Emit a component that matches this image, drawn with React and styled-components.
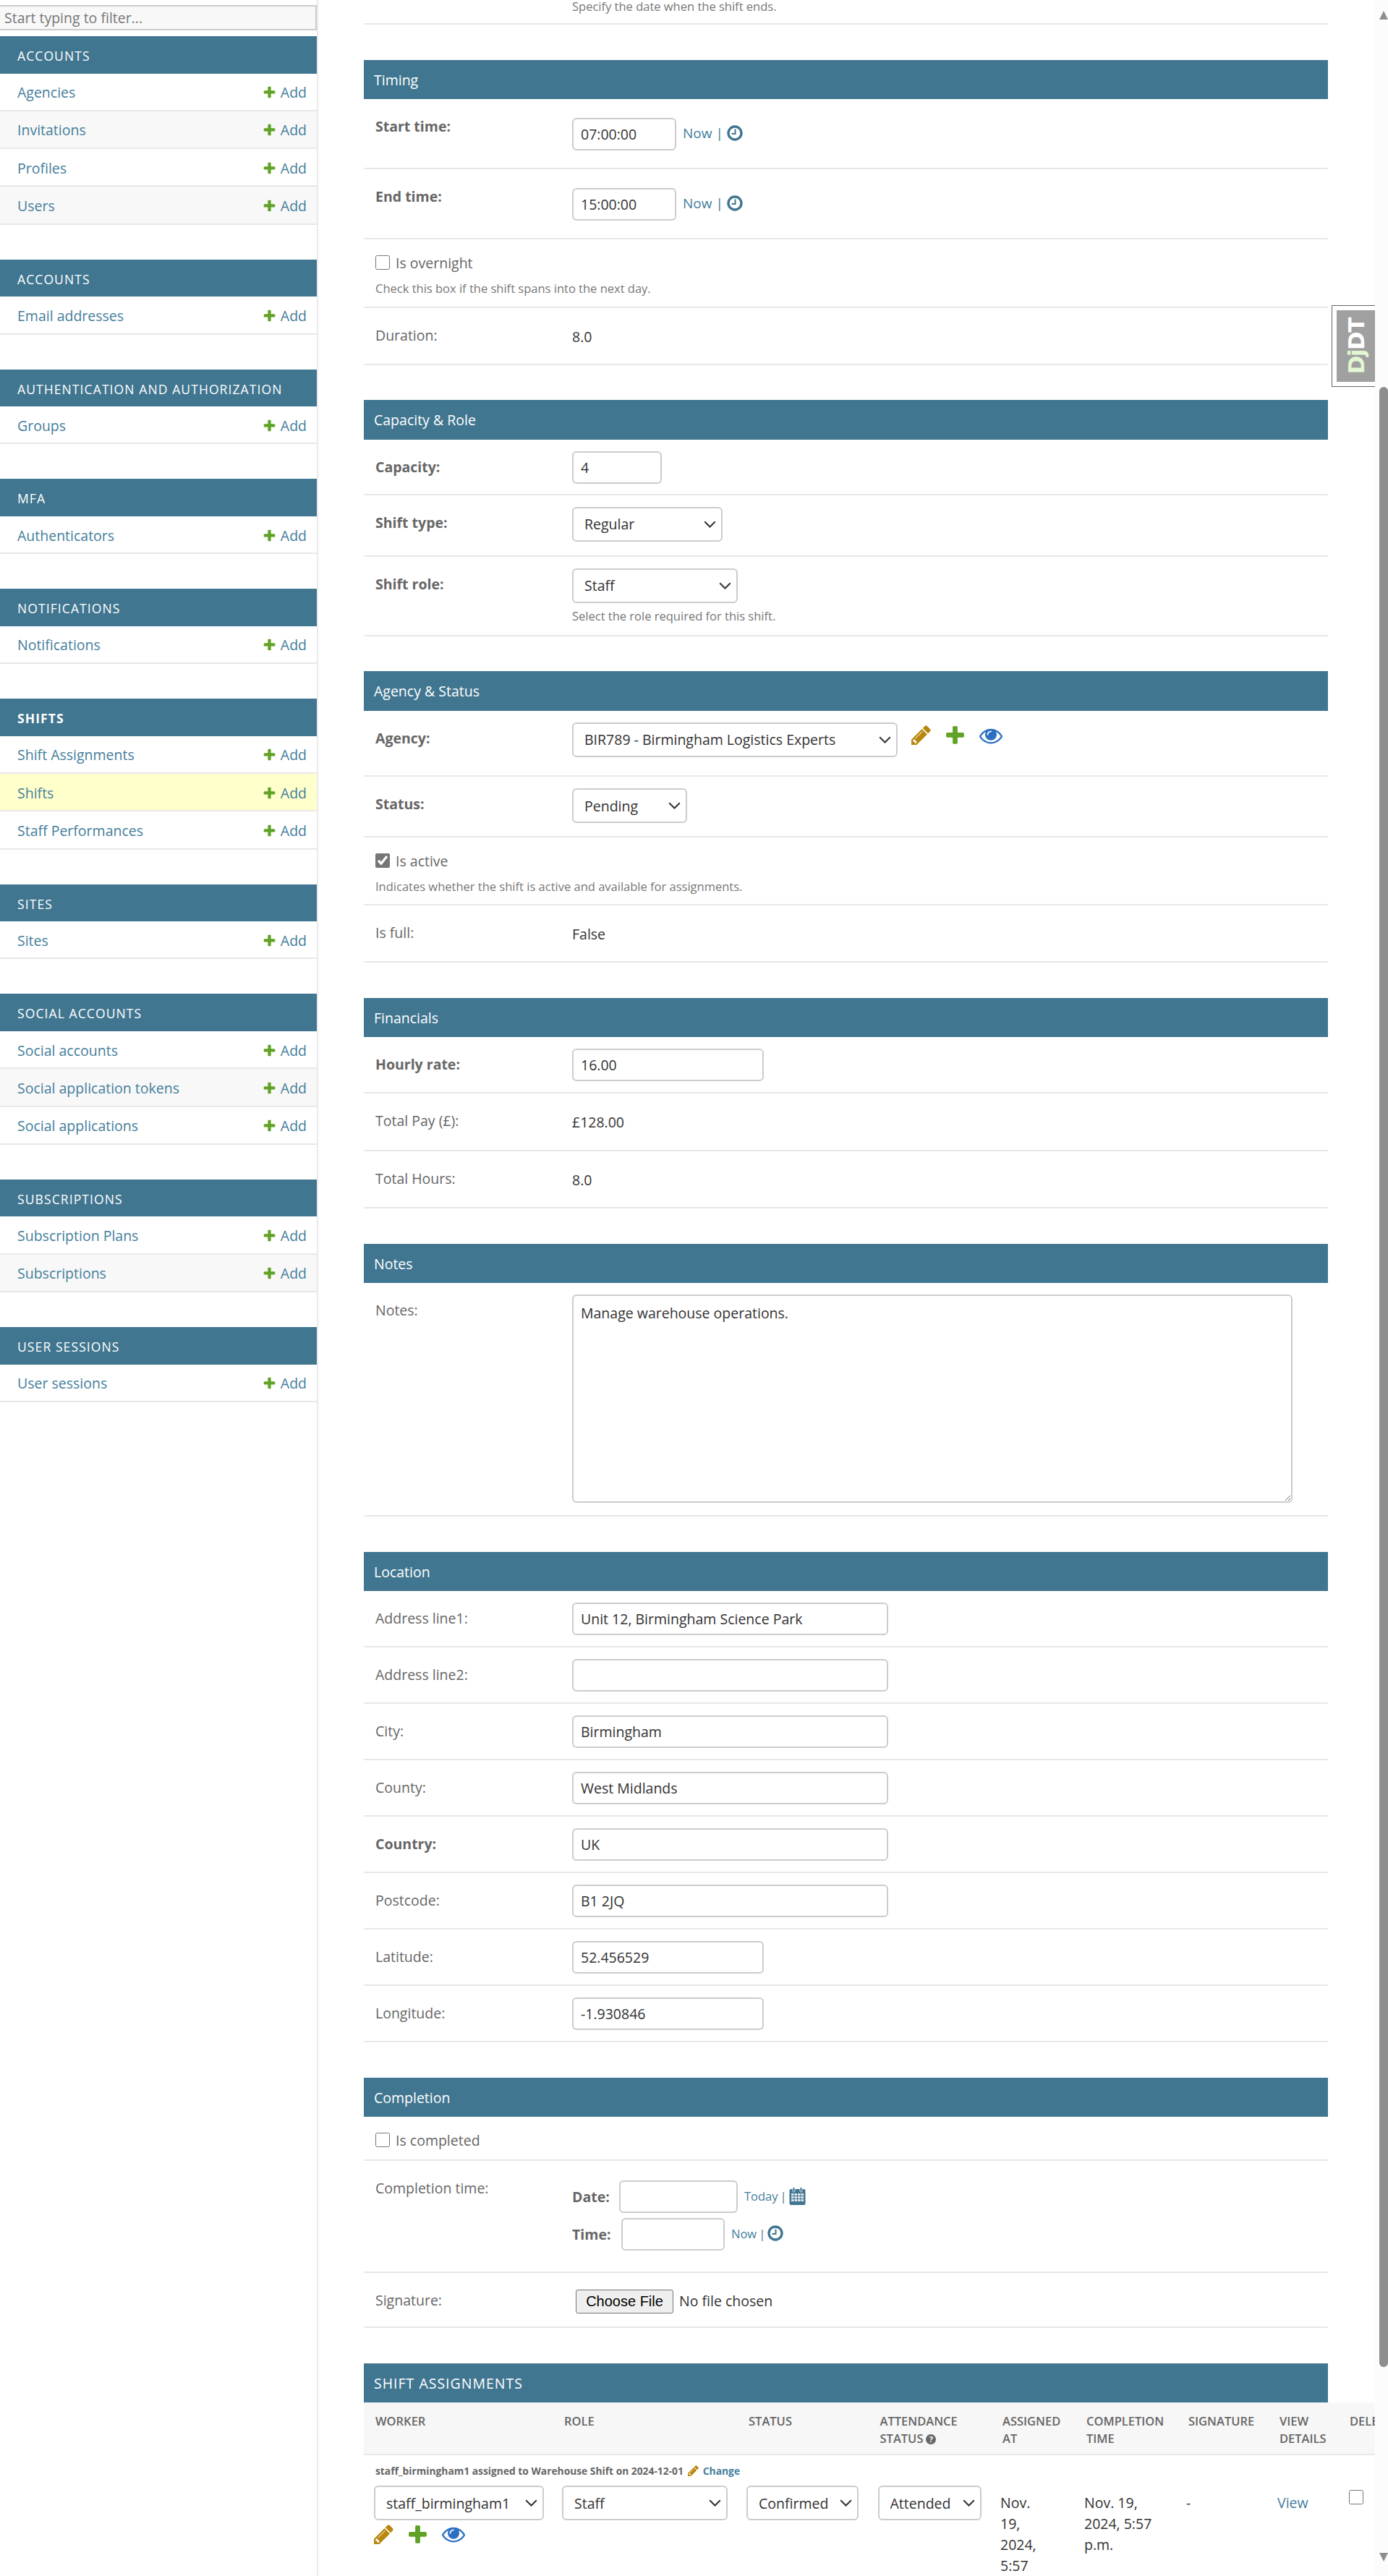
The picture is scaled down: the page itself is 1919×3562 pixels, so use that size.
import React from "react";
import styled, { createGlobalStyle } from "styled-components";

const FONT = `"Open Sans", "Noto Sans", sans-serif`;

const CHEVRON =
  "data:image/svg+xml," +
  encodeURIComponent(
    '<svg xmlns="http://www.w3.org/2000/svg" width="17" height="10" viewBox="0 0 17 10"><path d="M1.2 1.2 8.5 8.5 15.8 1.2" fill="none" stroke="#333" stroke-width="2"/></svg>'
  );

const GlobalStyle = createGlobalStyle`
  html, body {
    margin: 0;
    padding: 0;
    background: #fff;
    font-family: ${FONT};
  }
  * {
    box-sizing: border-box;
  }
`;

const Page = styled.div`
  display: flex;
  width: 1919px;
  height: 3562px;
  overflow: hidden;
  background: #fff;
`;

/* sidebar */
const Sidebar = styled.nav`
  flex: 0 0 440px;
  border-right: 2px solid #eaeaea;
  padding-top: 7px;
`;

const Filter = styled.input`
  display: block;
  width: 438px;
  height: 35px;
  margin-bottom: 8px;
  padding: 0 6px;
  border: 2px solid #ccc;
  border-left: 0;
  background: #f8f8f8;
  font: 19.5px ${FONT};
  &::placeholder {
    color: #777;
    opacity: 1;
  }
`;

const AppGroup = styled.section`
  margin-bottom: 48px;
`;

const AppCaption = styled.div`
  height: 51.5px;
  padding-left: 24px;
  background: #417690;
  color: #fff;
  font-size: 17.5px;
  font-weight: ${({ $current }) => ($current ? 700 : 400)};
  letter-spacing: 1.1px;
  line-height: 55px;
  text-transform: uppercase;
`;

const ModelRow = styled.div`
  display: flex;
  align-items: center;
  justify-content: space-between;
  height: 52.33px;
  padding: 2px 14px 0 24px;
  border-bottom: 2px solid #e8e8e8;
  background: ${({ $selected, $alt }) => ($selected ? "#ffc" : $alt ? "#f8f8f8" : "#fff")};
  color: #447e9b;
  font-size: 19.5px;
  font-weight: 500;
`;

const AddLink = styled.span`
  display: flex;
  align-items: center;
  gap: 7px;
  font-weight: 400;
`;

/* main form */
const Main = styled.main`
  position: relative;
  flex: 1;
  min-width: 0;
  padding: 0 65px 0 63px;
  overflow: hidden;
`;

const Fieldset = styled.section`
  margin-top: 48.5px;
`;

const Caption = styled.h2`
  height: 54.5px;
  margin: 0;
  padding-left: 14px;
  background: #417690;
  color: #fff;
  font-size: 19.5px;
  font-weight: 400;
  letter-spacing: ${({ $upper }) => ($upper ? "1px" : "0")};
  line-height: 56px;
  text-transform: ${({ $upper }) => ($upper ? "uppercase" : "none")};
`;

const Row = styled.div`
  display: flex;
  height: ${({ $h }) => $h}px;
  padding: 16px 16px 0;
  border-bottom: 2px solid #e8e8e8;
`;

const TopRow = styled.div`
  height: 34px;
  padding-left: 288px;
  border-bottom: 2px solid #e8e8e8;
  color: #777;
  font-size: 16.5px;
  line-height: 17px;
`;

const Label = styled.label`
  flex: 0 0 272px;
  margin-top: 8px;
  color: #666;
  font-size: 19.5px;
  font-weight: ${({ $bold }) => ($bold ? 700 : 400)};
  line-height: 27px;
`;

const Value = styled.div`
  margin-top: 10px;
  color: #333;
  font-size: 19.5px;
  line-height: 27px;
`;

const Controls = styled.div`
  display: flex;
  flex-direction: column;
  margin-top: ${({ $top }) => $top || 0}px;
`;

const Inline = styled.div`
  display: flex;
  align-items: flex-start;
`;

const TextInput = styled.input`
  display: block;
  width: ${({ $w }) => $w}px;
  height: 45px;
  padding: 0 10px;
  border: 2px solid #ccc;
  border-radius: 6px;
  background: #fff;
  color: #333;
  font: 19.5px ${FONT};
`;

const Select = styled.select`
  display: block;
  width: ${({ $w }) => $w}px;
  height: 48px;
  padding: 0 26px 0 15px;
  border: 2px solid #ccc;
  border-radius: 6px;
  appearance: none;
  background: #fff url("${CHEVRON}") no-repeat right 7px center;
  color: #333;
  font: 19.5px ${FONT};
`;

const Notes = styled.textarea`
  display: block;
  width: 996px;
  height: 288px;
  padding: 10px;
  border: 2px solid #ccc;
  border-radius: 6px;
  background: #fff;
  color: #333;
  font: 19.5px/27px ${FONT};
`;

const Help = styled.div`
  margin-top: ${({ $top }) => $top || 0}px;
  color: #777;
  font-size: 16.5px;
  line-height: 22px;
`;

const CheckLine = styled.label`
  display: flex;
  align-items: center;
  gap: 8px;
  height: 32px;
  color: #666;
  font-size: 19.5px;
`;

const Check = styled.input.attrs({ type: "checkbox" })`
  width: 20px;
  height: 20px;
  margin: 0;
  accent-color: #767676;
`;

const CheckBlock = styled.div`
  display: flex;
  flex-direction: column;
`;

const Shortcuts = styled.span`
  display: flex;
  align-items: center;
  gap: ${({ $small }) => ($small ? 3 : 5)}px;
  height: 42px;
  margin-left: 9px;
  color: #447e9b;
  font-size: ${({ $small }) => ($small ? 16.5 : 19)}px;
`;

const Sep = styled.span`
  color: #417690;
`;

const RelatedIcons = styled.div`
  display: flex;
  align-items: center;
  gap: 20px;
  height: ${({ $h }) => $h}px;
  margin-left: ${({ $left }) => $left}px;
`;

const SubRow = styled.div`
  display: flex;
  align-items: flex-start;
  margin-bottom: 7px;
`;

const SubLabel = styled.span`
  flex: 0 0 ${({ $w }) => $w}px;
  color: #666;
  font-size: 19.5px;
  font-weight: 700;
  line-height: 45px;
`;

const FileInput = styled.input.attrs({ type: "file" })`
  margin: 7px 0 0 5px;
  color: #333;
  font: 19.5px ${FONT};
  &::file-selector-button {
    width: 135px;
    height: 33px;
    margin-right: 8px;
    border: 1.5px solid #767676;
    border-radius: 3px;
    background: #efefef;
    color: #000;
    font: 20px "Liberation Sans", Arial, sans-serif;
  }
`;

/* inline table */
const Table = styled.div`
  width: 1447px;
`;

const TableGrid = styled.div`
  display: grid;
  grid-template-columns: 261px 255px 181.5px 169.5px 116px 141px 126px 97px 100px;
`;

const HeadRow = styled(TableGrid)`
  height: 73px;
  border-bottom: 2px solid #e8e8e8;
  background: #f7f7f7;
`;

const HeadCell = styled.div`
  padding: 14px 0 0 16px;
  color: #666;
  font-size: 16.5px;
  font-weight: 600;
  line-height: 23.5px;
  text-transform: uppercase;
`;

const HelpDot = styled.span`
  display: inline-block;
  width: 14px;
  height: 14px;
  margin-left: 4px;
  border-radius: 50%;
  background: #666;
  color: #fff;
  font-size: 11px;
  font-weight: 700;
  line-height: 14px;
  text-align: center;
  vertical-align: 1px;
`;

const InlineTitle = styled.div`
  display: flex;
  align-items: center;
  gap: 6px;
  height: 42px;
  padding-left: 16px;
  color: #666;
  font-size: 13.8px;
  font-weight: 700;
`;

const ChangeLink = styled.span`
  color: #447e9b;
`;

const Cell = styled.div`
  padding-left: ${({ $first }) => ($first ? 14 : 13)}px;
  color: #333;
  font-size: 19.5px;
  line-height: 29px;
`;

const TextCell = styled(Cell)`
  padding-top: 9px;
  color: ${({ $link }) => ($link ? "#447e9b" : "#333")};
`;

const RowCheck = styled(Check)`
  margin: 6px 0 0 1px;
`;

/* debug toolbar handle, lies over the page */
const DebugHandle = styled.div`
  position: absolute;
  top: 422px;
  right: 0;
  width: 60px;
  height: 113px;
  padding: 6px 0 6px 6px;
  border: 1.5px solid #666;
  border-right: 0;
  background: #fff;
`;

const DebugInner = styled.div`
  display: flex;
  align-items: center;
  justify-content: center;
  height: 100%;
  background: #a0a0a0;
  color: #fff;
  font: 700 31px "DejaVu Sans", sans-serif;
  letter-spacing: -1.5px;
`;

const DebugText = styled.span`
  writing-mode: vertical-rl;
  transform: rotate(180deg);
  span {
    color: #e3f7d2;
  }
`;

/* scrollbar */
const ScrollTrack = styled.div`
  flex: 0 0 18px;
  padding-left: 6px;
  background: #fcfcfc;
`;

const ScrollUp = styled.div`
  width: 0;
  height: 0;
  margin: 15px 0 0 0;
  border-left: 6px solid transparent;
  border-right: 6px solid transparent;
  border-bottom: 12px solid #8e8e8e;
`;

const ScrollThumb = styled.div`
  height: 2738px;
  margin-top: 508px;
  border-radius: 6px;
  background: #8e8e8e;
`;

const ScrollDown = styled.div`
  width: 0;
  height: 0;
  margin-top: 257px;
  border-left: 6px solid transparent;
  border-right: 6px solid transparent;
  border-top: 12px solid #8e8e8e;
`;

/* icons */
const PencilIcon = ({ size = 27 }) => (
  <svg width={size} height={size} viewBox="128 128 1536 1536" style={{ flex: "none" }}>
    <path
      fill="#b8860b"
      d="M491 1536l91-91-235-235-91 91v107h128v128h107zm523-928q0-22-22-22-10 0-17 7l-542 542q-7 7-7 17 0 22 22 22 10 0 17-7l542-542q7-7 7-17zm-54-192l416 416-832 832h-416v-416zm683 96q0 53-37 90l-166 166-416-416 166-165q36-38 90-38 53 0 91 38l235 234q37 39 37 91z"
    />
  </svg>
);

const PlusIcon = ({ size = 27 }) => (
  <svg width={size} height={size} viewBox="128 128 1536 1536" style={{ flex: "none" }}>
    <path
      fill="#5fa225"
      d="M1600 796v192q0 40-28 68t-68 28h-416v416q0 40-28 68t-68 28h-192q-40 0-68-28t-28-68v-416h-416q-40 0-68-28t-28-68v-192q0-40 28-68t68-28h416v-416q0-40 28-68t68-28h192q40 0 68 28t28 68v416h416q40 0 68 28t28 68z"
    />
  </svg>
);

const EyeIcon = () => (
  <svg width="32" height="32" viewBox="0 0 1792 1792" style={{ flex: "none" }}>
    <path
      fill="#2a6fc2"
      d="M1664 960q-152-236-381-353 61 104 61 225 0 185-131.5 316.5t-316.5 131.5-316.5-131.5-131.5-316.5q0-121 61-225-229 117-381 353 133 205 333.5 326.5t434.5 121.5 434.5-121.5 333.5-326.5zm-720-384q0-20-14-34t-34-14q-125 0-214.5 89.5t-89.5 214.5q0 20 14 34t34 14 34-14 14-34q0-86 61-147t147-61q20 0 34-14t14-34zm848 384q0 34-20 69-140 230-376.5 368.5t-499.5 138.5-499.5-139-376.5-368q-20-35-20-69t20-69q140-229 376.5-368t499.5-139 499.5 139 376.5 368q20 35 20 69z"
    />
  </svg>
);

const ClockIcon = () => (
  <svg width="22" height="22" viewBox="0 0 22 22" style={{ flex: "none" }}>
    <circle cx="11" cy="11" r="9" fill="none" stroke="#417690" strokeWidth="3.4" />
    <path d="M11.5 5.5v6.5h-5" fill="none" stroke="#417690" strokeWidth="2" />
  </svg>
);

const CalendarIcon = () => (
  <svg width="23" height="25" viewBox="0 0 23 25" style={{ flex: "none" }}>
    <rect x="0.5" y="3" width="22" height="22" rx="2" fill="#417690" />
    <rect x="5" y="0.5" width="3" height="6.5" rx="1.5" fill="#417690" stroke="#fff" strokeWidth="0.8" />
    <rect x="15" y="0.5" width="3" height="6.5" rx="1.5" fill="#417690" stroke="#fff" strokeWidth="0.8" />
    <path
      d="M3 9h3.5v3H3zM7.5 9H11v3H7.5zM12 9h3.5v3H12zM16.5 9H20v3h-3.5zM3 13h3.5v3H3zM7.5 13H11v3H7.5zM12 13h3.5v3H12zM16.5 13H20v3h-3.5zM3 17h3.5v3H3zM7.5 17H11v3H7.5zM12 17h3.5v3H12zM16.5 17H20v3h-3.5z"
      fill="#fff"
      opacity="0.85"
    />
  </svg>
);

const groups = [
  { title: "Accounts", models: ["Agencies", "Invitations", "Profiles", "Users"] },
  { title: "Accounts", models: ["Email addresses"] },
  { title: "Authentication and Authorization", models: ["Groups"] },
  { title: "MFA", models: ["Authenticators"] },
  { title: "Notifications", models: ["Notifications"] },
  { title: "Shifts", current: true, models: ["Shift Assignments", "Shifts", "Staff Performances"] },
  { title: "Sites", models: ["Sites"] },
  { title: "Social Accounts", models: ["Social accounts", "Social application tokens", "Social applications"] },
  { title: "Subscriptions", models: ["Subscription Plans", "Subscriptions"] },
  { title: "User Sessions", models: ["User sessions"] },
];

const location = [
  { label: "Address line1:", value: "Unit 12, Birmingham Science Park", w: 437 },
  { label: "Address line2:", value: "", w: 437 },
  { label: "City:", value: "Birmingham", w: 437 },
  { label: "County:", value: "West Midlands", w: 437 },
  { label: "Country:", value: "UK", w: 437, bold: true },
  { label: "Postcode:", value: "B1 2JQ", w: 437 },
  { label: "Latitude:", value: "52.456529", w: 265 },
  { label: "Longitude:", value: "-1.930846", w: 265 },
];

const tableHeads = [
  "Worker",
  "Role",
  "Status",
  "Attendance status",
  "Assigned at",
  "Completion time",
  "Signature",
  "View details",
  "Delete?",
];

const Option = ({ children }) => <option>{children}</option>;

function NavSidebar() {
  return (
    <Sidebar>
      <Filter placeholder="Start typing to filter..." />
      {groups.map((group, i) => (
        <AppGroup key={i}>
          <AppCaption $current={group.current}>{group.title}</AppCaption>
          {group.models.map((model, j) => (
            <ModelRow key={model} $alt={j % 2 === 1} $selected={model === "Shifts"}>
              {model}
              <AddLink>
                <PlusIcon size={17} />
                Add
              </AddLink>
            </ModelRow>
          ))}
        </AppGroup>
      ))}
    </Sidebar>
  );
}

function TimeField({ label, value, h }) {
  return (
    <Row $h={h}>
      <Label $bold>{label}</Label>
      <Controls $top={10}>
        <Inline>
          <TextInput $w={144} defaultValue={value} />
          <Shortcuts>
            Now <Sep>|</Sep> <ClockIcon />
          </Shortcuts>
        </Inline>
      </Controls>
    </Row>
  );
}

function ShiftAssignments() {
  return (
    <Fieldset>
      <Caption $upper>Shift assignments</Caption>
      <Table>
        <HeadRow>
          {tableHeads.map((head) => (
            <HeadCell key={head}>
              {head}
              {head === "Attendance status" && <HelpDot>?</HelpDot>}
            </HeadCell>
          ))}
        </HeadRow>
        <InlineTitle>
          staff_birmingham1 assigned to Warehouse Shift on 2024-12-01
          <PencilIcon size={15} />
          <ChangeLink>Change</ChangeLink>
        </InlineTitle>
        <TableGrid>
          <Cell $first>
            <Select $w={235}>
              <Option>staff_birmingham1</Option>
            </Select>
            <RelatedIcons $h={38} $left={0}>
              <PencilIcon />
              <PlusIcon />
              <EyeIcon />
            </RelatedIcons>
          </Cell>
          <Cell>
            <Select $w={229}>
              <Option>Staff</Option>
            </Select>
          </Cell>
          <Cell>
            <Select $w={155}>
              <Option>Confirmed</Option>
            </Select>
          </Cell>
          <Cell>
            <Select $w={143}>
              <Option>Attended</Option>
            </Select>
          </Cell>
          <TextCell>
            Nov.
            <br />
            19,
            <br />
            2024,
            <br />
            5:57
          </TextCell>
          <TextCell>
            Nov. 19,
            <br />
            2024, 5:57
            <br />
            p.m.
          </TextCell>
          <TextCell>-</TextCell>
          <TextCell $link>View</TextCell>
          <Cell $first>
            <RowCheck />
          </Cell>
        </TableGrid>
      </Table>
    </Fieldset>
  );
}

export default function App() {
  return (
    <Page>
      <GlobalStyle />
      <NavSidebar />
      <Main>
        <TopRow>Specify the date when the shift ends.</TopRow>

        <Fieldset>
          <Caption>Timing</Caption>
          <TimeField label="Start time:" value="07:00:00" h={96.5} />
          <TimeField label="End time:" value="15:00:00" h={97.5} />
          <Row $h={94.5}>
            <CheckBlock>
              <CheckLine>
                <Check />
                Is overnight
              </CheckLine>
              <Help $top={9}>Check this box if the shift spans into the next day.</Help>
            </CheckBlock>
          </Row>
          <Row $h={79}>
            <Label>Duration:</Label>
            <Value>8.0</Value>
          </Row>
        </Fieldset>

        <Fieldset>
          <Caption>Capacity &amp; Role</Caption>
          <Row $h={77}>
            <Label $bold>Capacity:</Label>
            <TextInput $w={124} defaultValue="4" />
          </Row>
          <Row $h={85}>
            <Label $bold>Shift type:</Label>
            <Select $w={208}>
              <Option>Regular</Option>
            </Select>
          </Row>
          <Row $h={110}>
            <Label $bold>Shift role:</Label>
            <Controls>
              <Select $w={229}>
                <Option>Staff</Option>
              </Select>
              <Help $top={7}>Select the role required for this shift.</Help>
            </Controls>
          </Row>
        </Fieldset>

        <Fieldset>
          <Caption>Agency &amp; Status</Caption>
          <Row $h={91.5}>
            <Label $bold>Agency:</Label>
            <Select $w={450}>
              <Option>BIR789 - Birmingham Logistics Experts</Option>
            </Select>
            <RelatedIcons $h={36} $left={19}>
              <PencilIcon />
              <PlusIcon />
              <EyeIcon />
            </RelatedIcons>
          </Row>
          <Row $h={84}>
            <Label $bold>Status:</Label>
            <Select $w={159}>
              <Option>Pending</Option>
            </Select>
          </Row>
          <Row $h={94}>
            <CheckBlock>
              <CheckLine>
                <Check defaultChecked />
                Is active
              </CheckLine>
              <Help $top={9}>Indicates whether the shift is active and available for assignments.</Help>
            </CheckBlock>
          </Row>
          <Row $h={79}>
            <Label>Is full:</Label>
            <Value>False</Value>
          </Row>
        </Fieldset>

        <Fieldset>
          <Caption>Financials</Caption>
          <Row $h={78}>
            <Label $bold>Hourly rate:</Label>
            <TextInput $w={265} defaultValue="16.00" />
          </Row>
          <Row $h={80}>
            <Label>Total Pay (£):</Label>
            <Value>£128.00</Value>
          </Row>
          <Row $h={79}>
            <Label>Total Hours:</Label>
            <Value>8.0</Value>
          </Row>
        </Fieldset>

        <Fieldset>
          <Caption>Notes</Caption>
          <Row $h={323}>
            <Label>Notes:</Label>
            <Notes defaultValue="Manage warehouse operations." />
          </Row>
        </Fieldset>

        <Fieldset>
          <Caption>Location</Caption>
          {location.map((field) => (
            <Row key={field.label} $h={78}>
              <Label $bold={field.bold}>{field.label}</Label>
              <TextInput $w={field.w} defaultValue={field.value} />
            </Row>
          ))}
        </Fieldset>

        <Fieldset>
          <Caption>Completion</Caption>
          <Row $h={61}>
            <CheckLine>
              <Check />
              Is completed
            </CheckLine>
          </Row>
          <Row $h={155}>
            <Label>Completion time:</Label>
            <Controls $top={11}>
              <SubRow>
                <SubLabel $w={65}>Date:</SubLabel>
                <TextInput $w={164} />
                <Shortcuts $small>
                  Today <Sep>|</Sep> <CalendarIcon />
                </Shortcuts>
              </SubRow>
              <SubRow>
                <SubLabel $w={68}>Time:</SubLabel>
                <TextInput $w={143} />
                <Shortcuts $small>
                  Now <Sep>|</Sep> <ClockIcon />
                </Shortcuts>
              </SubRow>
            </Controls>
          </Row>
          <Row $h={76}>
            <Label>Signature:</Label>
            <FileInput />
          </Row>
        </Fieldset>

        <ShiftAssignments />

        <DebugHandle>
          <DebugInner>
            <DebugText>
              <span>Dj</span>DT
            </DebugText>
          </DebugInner>
        </DebugHandle>
      </Main>
      <ScrollTrack>
        <ScrollUp />
        <ScrollThumb />
        <ScrollDown />
      </ScrollTrack>
    </Page>
  );
}
